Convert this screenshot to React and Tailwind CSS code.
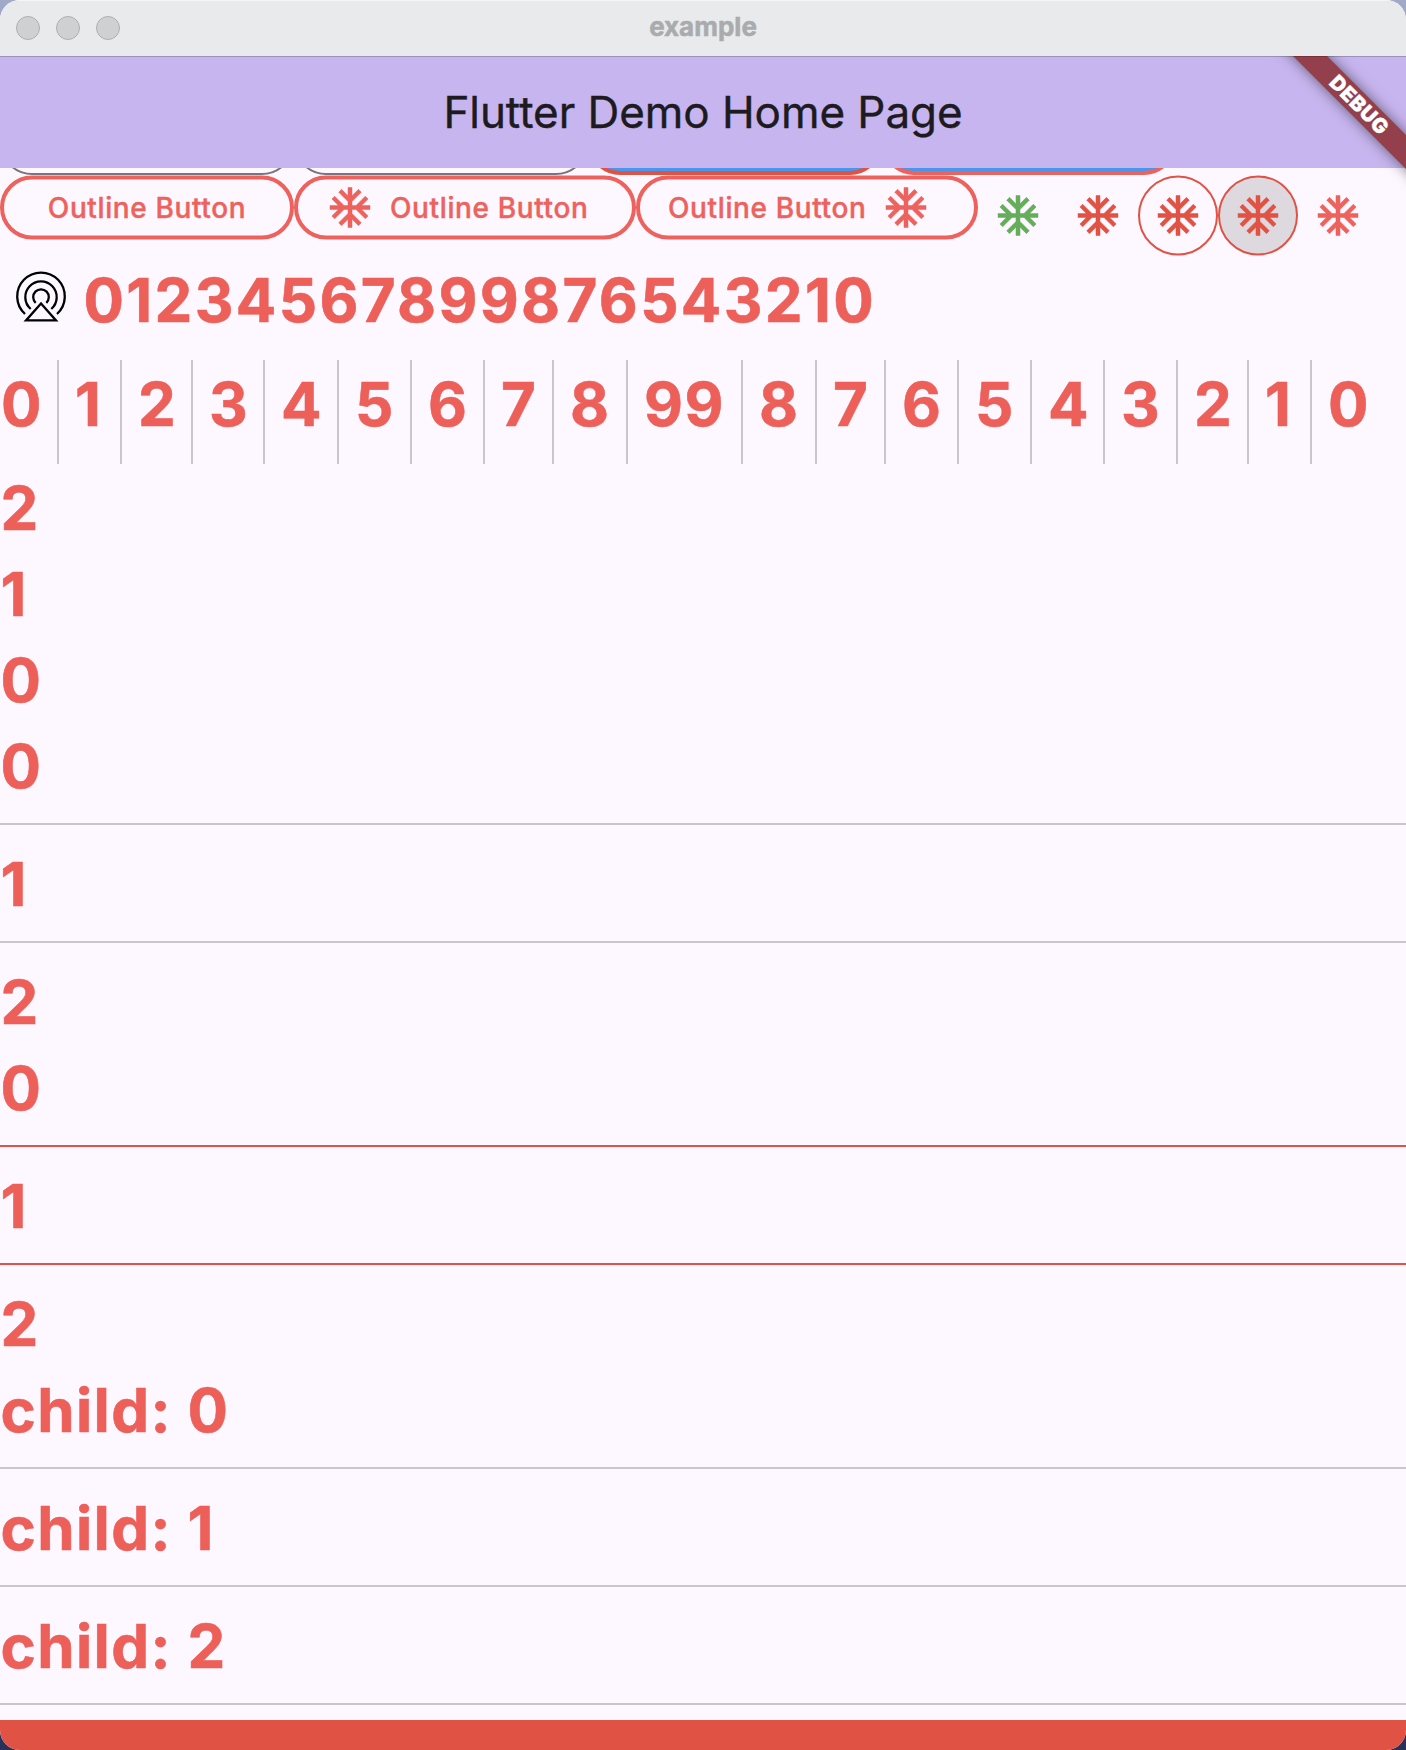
const MARK = "M22 11h-4.17l3.24-3.24-1.41-1.42L15 11h-2V9l4.66-4.66-1.42-1.41L13 6.17V2h-2v4.17L7.76 2.93 6.34 4.34 11 9v2H9L4.34 6.34 2.93 7.76 6.17 11H2v2h4.17l-3.24 3.24 1.41 1.42L9 13h2v2l-4.66 4.66 1.42 1.41L11 17.83V22h2v-4.17l3.24 3.24 1.42-1.41L13 15v-2h2l4.66 4.66 1.41-1.42L17.83 13H22z";

function Flake() {
  return (
    <svg viewBox="0 0 24 24" fill="currentColor" stroke="currentColor" strokeWidth="0.25" className="h-12 w-12 shrink-0">
      <path d={MARK} />
    </svg>
  );
}

function Airplay() {
  return (
    <svg viewBox="0 0 50 50" fill="none" stroke="#000" strokeWidth="2.3" className="h-[50px] w-[50px] shrink-0 overflow-visible">
      <path d="M9 42A23.8 23.8 0 1 1 41 42" />
      <path d="M14.7 37A15.7 15.7 0 1 1 35.3 37" />
      <path d="M19.7 30.8A7.8 7.8 0 1 1 30.3 30.8" />
      <path d="M25 31.4 10 48.4H40Z" />
    </svg>
  );
}

const cells = [
  ["0", 42], ["1", 31], ["2", 39], ["3", 40], ["4", 42], ["5", 41], ["6", 41], ["7", 37], ["8", 42], ["99", 83],
  ["8", 42], ["7", 37], ["6", 41], ["5", 41], ["4", 41], ["3", 41], ["2", 39], ["1", 31], ["0", 42],
];

const rows = [
  ["2"], ["1"], ["0"], ["0", "gray"], ["1", "gray"], ["2"], ["0", "red"], ["1", "red"], ["2"],
  ["child: 0", "gray"], ["child: 1", "gray"], ["child: 2", "gray"],
];

const outline = "flex h-16 shrink-0 items-center rounded-full border-4 border-[#ed625c] text-[28px] font-medium tracking-[0.62px] text-[#ed625c] whitespace-nowrap [-webkit-text-stroke:0.4px]";

export default function App() {
  return (
    <div className="h-[1750px] w-[1406px] bg-gradient-to-b from-[#a0a9c8] to-[#28315a] font-['Inter',sans-serif]">
      <div className="flex h-full flex-col overflow-hidden rounded-[20px] bg-[#fdf8ff]">
        <header className="relative flex h-14 shrink-0 items-center justify-center border-t border-[#f5f5f6] bg-[#e8eaec]">
          <div className="absolute left-4 top-[15px] flex gap-4">
            {[0, 1, 2].map((i) => <span key={i} className="h-6 w-6 rounded-full border border-[#aeafb0] bg-[#cfd0d1]" />)}
          </div>
          <span className="relative top-[-2px] text-[26px] font-bold text-[#a9abac] [-webkit-text-stroke:0.5px]">example</span>
        </header>
        <div className="relative flex h-28 shrink-0 items-center justify-center bg-[#c7b5ef]">
          <h1 className="text-[44px] leading-none tracking-[-0.05px] text-[#1d1b20] [-webkit-text-stroke:0.4px]">Flutter Demo Home Page</h1>
          <div className="absolute right-0 top-0 h-[150px] w-[170px] overflow-hidden">
            <div className="absolute left-[-9px] top-[35px] flex h-6 w-[260px] rotate-45 items-center justify-center bg-[#943f4c] pl-1.5 text-[20.5px] font-black tracking-[0.6px] text-white shadow-[0_0_14px_rgba(0,0,0,0.5)] [-webkit-text-stroke:0.3px]">DEBUG</div>
          </div>
          <div className="absolute inset-x-0 top-0 h-px bg-black/20" />
        </div>
        <main className="flex min-h-0 flex-1 flex-col overflow-hidden">
          <div className="flex h-[7px] shrink-0 items-end overflow-hidden">
            <div className="h-16 w-[294px] rounded-full border-2 border-[#79747e]" />
            <div className="h-16 w-[294px] rounded-full border-2 border-[#79747e]" />
            <div className="h-16 w-[294px] rounded-full border-4 border-[#e05243] bg-[#4a96ec]" />
            <div className="h-16 w-[294px] rounded-full border-4 border-[#ed625c] bg-[#4a96ec]" />
          </div>
          <div className="flex h-[81px] shrink-0 translate-y-[0.5px] items-start">
            <div className={outline + " w-[294px] justify-center"}>Outline Button</div>
            <div className={outline + " w-[342px] gap-4 pl-7"}><Flake />Outline Button</div>
            <div className={outline + " w-[342px] gap-4 pl-7"}>Outline Button<Flake /></div>
            <div className="flex">
              <div className="flex h-20 w-20 items-center justify-center text-[#65ad5b]"><Flake /></div>
              <div className="flex h-20 w-20 items-center justify-center text-[#e05243]"><Flake /></div>
              <div className="flex h-20 w-20 items-center justify-center rounded-full border-2 border-[#e05243] text-[#e05243]"><Flake /></div>
              <div className="flex h-20 w-20 items-center justify-center rounded-full border-2 border-[#e05243] bg-[#ded9df] text-[#e05243]"><Flake /></div>
              <div className="flex h-20 w-20 items-center justify-center text-[#ed625c]"><Flake /></div>
            </div>
          </div>
          <div className="flex flex-col text-[60px] font-bold leading-[89px] text-[#ed5f59] [-webkit-text-stroke:0.6px]">
            <div className="flex h-[104px] shrink-0 pl-4">
              <div className="flex h-[82px] items-center"><Airplay /></div>
              <span className="pl-[17.5px] tracking-[2.35px]">01234567899876543210</span>
            </div>
            <div className="flex h-[104px] shrink-0">
              {cells.map(([t, w], i) => (
                <div key={i} className="flex shrink-0">
                  <span className="whitespace-nowrap pl-px tracking-[1.5px]" style={{ width: w }}>{t}</span>
                  {i < cells.length - 1 && <div className="mx-[15px] w-0.5 bg-[#cac4cf]" />}
                </div>
              ))}
            </div>
            {rows.map(([t, line], i) => (
              <div key={i} className="shrink-0">
                <div className="h-[86px] pl-[0.5px] tracking-[1.4px]">{t}</div>
                {line && <div className="flex h-8 items-center"><div className={line === "red" ? "h-0.5 w-full bg-[#e05243]" : "h-0.5 w-full bg-[#cac4cf]"} /></div>}
              </div>
            ))}
          </div>
        </main>
        <footer className="h-[30px] shrink-0 bg-[#e05243]" />
      </div>
    </div>
  );
}
